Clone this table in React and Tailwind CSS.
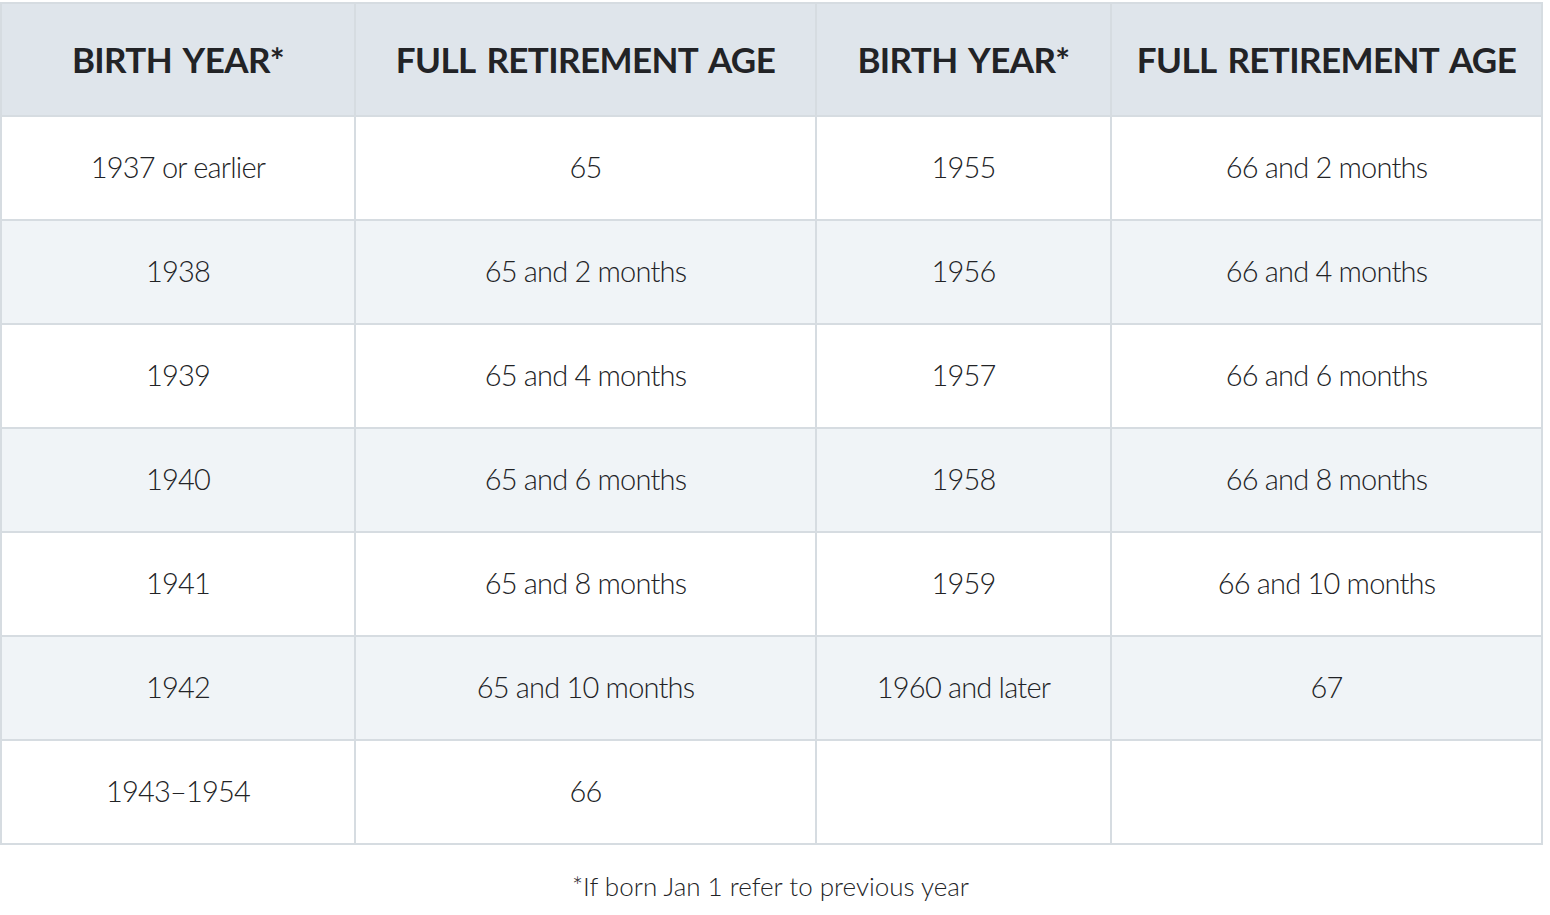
import React from 'react';

const rows = [
    ['1937 or earlier', '65', '1955', '66 and 2 months'],
    ['1938', '65 and 2 months', '1956', '66 and 4 months'],
    ['1939', '65 and 4 months', '1957', '66 and 6 months'],
    ['1940', '65 and 6 months', '1958', '66 and 8 months'],
    ['1941', '65 and 8 months', '1959', '66 and 10 months'],
    ['1942', '65 and 10 months', '1960 and later', '67'],
    ['1943–1954', '66', '', ''],
];

const headers = ['BIRTH YEAR*', 'FULL RETIREMENT AGE', 'BIRTH YEAR*', 'FULL RETIREMENT AGE'];

const App = () => {
    return (
        <div className="w-[1550px] h-[915px] bg-white text-[#222326] font-['Lato','Noto_Sans',sans-serif]">
            <div className="pt-[2px]">
                <table className="w-[1541px] table-fixed border-collapse border-2 border-[#d6dce1]">
                    <colgroup>
                        <col className="w-[354px]" />
                        <col className="w-[461px]" />
                        <col className="w-[295px]" />
                        <col className="w-[431px]" />
                    </colgroup>
                    <thead>
                        <tr className="h-[113px] bg-[#dfe5eb]">
                            {headers.map((h, i) => (
                                <th key={i} className="border-2 border-[#d6dce1] text-center align-middle text-[35px] font-bold tracking-[-0.6px] [word-spacing:4px]">
                                    {h}
                                </th>
                            ))}
                        </tr>
                    </thead>
                    <tbody>
                        {rows.map((r, i) => (
                            <tr key={i} className={`h-[104px] ${i % 2 === 1 ? 'bg-[#f0f4f7]' : 'bg-white'}`}>
                                {r.map((c, j) => (
                                    <td key={j} className="border-2 border-[#d6dce1] text-center align-middle text-[29px] font-light tracking-[-0.8px] pb-[3px]">
                                        {c}
                                    </td>
                                ))}
                            </tr>
                        ))}
                    </tbody>
                </table>
            </div>
            {/* Footnote */}
            <p className="w-[1541px] text-center text-[26px] font-light mt-[22px]">
                *If born Jan 1 refer to previous year
            </p>
        </div>
    );
};

export default App;
